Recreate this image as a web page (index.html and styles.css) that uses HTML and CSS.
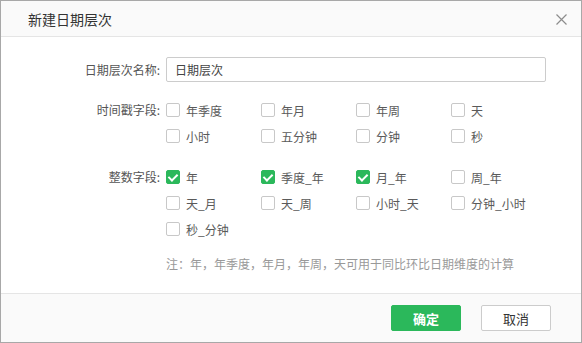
FILE: index.html
```html
<!DOCTYPE html>
<html lang="zh-CN">
<head>
    <meta charset="UTF-8">
    <title>新建日期层次</title>
    <link rel="stylesheet" href="styles.css">
</head>
<body>
    <div class="dialog">
        <div class="dialog-header">
            <span class="dialog-title">新建日期层次</span>
            <span class="dialog-close">
                <svg width="11" height="11" viewBox="0 0 11 11"><path d="M0.5 0.5 L10.5 10.5 M10.5 0.5 L0.5 10.5" stroke="#8c8c8c" stroke-width="1.2" fill="none"/></svg>
            </span>
        </div>
        <div class="dialog-body">
            <div class="form-row name-row">
                <label class="form-label">日期层次名称:</label>
                <input class="text-input" type="text" value="日期层次">
            </div>
            <div class="form-row time-row">
                <label class="form-label">时间戳字段:</label>
                <div class="check-grid">
                    <span class="check-item"><i class="box"></i>年季度</span>
                    <span class="check-item"><i class="box"></i>年月</span>
                    <span class="check-item"><i class="box"></i>年周</span>
                    <span class="check-item"><i class="box"></i>天</span>
                    <span class="check-item"><i class="box"></i>小时</span>
                    <span class="check-item"><i class="box"></i>五分钟</span>
                    <span class="check-item"><i class="box"></i>分钟</span>
                    <span class="check-item"><i class="box"></i>秒</span>
                </div>
            </div>
            <div class="form-row int-row">
                <label class="form-label">整数字段:</label>
                <div class="check-grid">
                    <span class="check-item"><i class="box checked"></i>年</span>
                    <span class="check-item"><i class="box checked"></i>季度_年</span>
                    <span class="check-item"><i class="box checked"></i>月_年</span>
                    <span class="check-item"><i class="box"></i>周_年</span>
                    <span class="check-item"><i class="box"></i>天_月</span>
                    <span class="check-item"><i class="box"></i>天_周</span>
                    <span class="check-item"><i class="box"></i>小时_天</span>
                    <span class="check-item"><i class="box"></i>分钟_小时</span>
                    <span class="check-item"><i class="box"></i>秒_分钟</span>
                </div>
            </div>
            <div class="form-row note-row">
                <span></span>
                <p class="note">注：年，年季度，年月，年周，天可用于同比环比日期维度的计算</p>
            </div>
        </div>
        <div class="dialog-footer">
            <button class="btn btn-primary">确定</button>
            <button class="btn">取消</button>
        </div>
    </div>
</body>
</html>
```

FILE: styles.css
```css
body {
    margin: 0;
    font-family: "Noto Sans CJK SC", "Noto Sans", sans-serif;
    background-color: #ffffff;
}
.dialog {
    width: 582px;
    height: 343px;
    box-sizing: border-box;
    border: 1px solid #a8a8a8;
    display: flex;
    flex-direction: column;
}
.dialog-header {
    height: 35px;
    flex: none;
    background-color: #fafafa;
    border-bottom: 1px solid #e5e5e5;
    display: flex;
    align-items: center;
    justify-content: space-between;
    padding: 0 14px 0 27px;
}
.dialog-title {
    font-size: 14px;
    color: #333333;
}
.dialog-close {
    display: flex;
    margin-top: 1px;
}
.dialog-body {
    flex: 1;
    padding-top: 20px;
}
.form-row {
    display: grid;
    grid-template-columns: 159px 1fr;
    column-gap: 6px;
}
.form-label {
    font-size: 12px;
    color: #555555;
    text-align: right;
    line-height: 26px;
}
.name-row .form-label {
    line-height: 25px;
}
.text-input {
    width: 380px;
    height: 25px;
    box-sizing: border-box;
    border: 1px solid #cccccc;
    border-radius: 2px;
    padding: 0 8px;
    font-family: inherit;
    font-size: 12px;
    color: #444444;
    outline: none;
}
.time-row {
    margin-top: 15px;
}
.int-row {
    margin-top: 15px;
}
.check-grid {
    display: grid;
    grid-template-columns: repeat(4, 95px);
}
.check-item {
    display: flex;
    align-items: center;
    height: 26px;
    font-size: 12px;
    color: #5a5a5a;
}
.box {
    width: 14px;
    height: 14px;
    box-sizing: border-box;
    border: 1px solid #c8c8c8;
    border-radius: 2px;
    background-color: #ffffff;
    margin-right: 6px;
    flex: none;
    position: relative;
}
.box.checked {
    background-color: #2bb85b;
    border-color: #2bb85b;
}
.box.checked::after {
    content: '';
    position: absolute;
    left: 3px;
    top: 1px;
    width: 4px;
    height: 7px;
    border: solid #ffffff;
    border-width: 0 2px 2px 0;
    transform: rotate(45deg);
}
.note-row {
    margin-top: 12px;
}
.note {
    margin: 0;
    font-size: 12px;
    line-height: 20px;
    color: #999999;
}
.dialog-footer {
    height: 48px;
    flex: none;
    background-color: #fafafa;
    border-top: 1px solid #e5e5e5;
    display: flex;
    align-items: center;
    justify-content: flex-end;
    gap: 20px;
    padding-right: 30px;
}
.btn {
    width: 70px;
    height: 26px;
    border: 1px solid #cccccc;
    border-radius: 2px;
    background-color: #ffffff;
    font-family: inherit;
    font-size: 13px;
    color: #333333;
    cursor: pointer;
}
.btn-primary {
    background-color: #2bb85b;
    border-color: #2bb85b;
    color: #ffffff;
    font-weight: bold;
}
```
